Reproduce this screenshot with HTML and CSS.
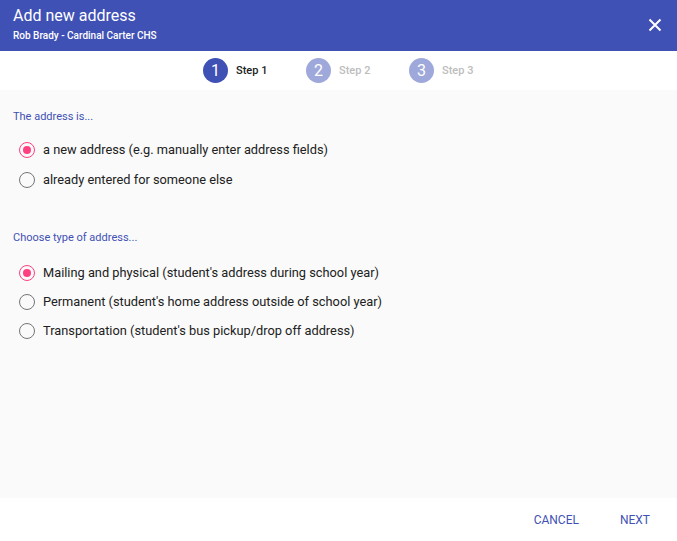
FILE: index.html
```html
<!DOCTYPE html>
<html>
<head>
<meta charset="utf-8">
<link rel="stylesheet" href="styles.css">
</head>
<body>
<div class="dialog">
  <header class="header">
    <div class="titles">
      <div class="title">Add new address</div>
      <div class="subtitle">Rob Brady - Cardinal Carter CHS</div>
    </div>
    <button class="close" aria-label="Close">
      <svg width="14" height="14" viewBox="0 0 14 14"><path d="M1.5 1.5 L12.5 12.5 M12.5 1.5 L1.5 12.5" stroke="#fff" stroke-width="2" fill="none"/></svg>
    </button>
  </header>
  <nav class="stepper">
    <div class="step active"><span class="num">1</span><span class="label">Step 1</span></div>
    <div class="step"><span class="num">2</span><span class="label">Step 2</span></div>
    <div class="step"><span class="num">3</span><span class="label">Step 3</span></div>
  </nav>
  <main class="content">
    <div class="section-label">The address is...</div>
    <div class="group">
      <label class="radio checked"><span class="ring"></span><span>a new address (e.g. manually enter address fields)</span></label>
      <label class="radio"><span class="ring"></span><span>already entered for someone else</span></label>
    </div>
    <div class="section-label second">Choose type of address...</div>
    <div class="group group-two">
      <label class="radio checked"><span class="ring"></span><span>Mailing and physical (student's address during school year)</span></label>
      <label class="radio"><span class="ring"></span><span>Permanent (student's home address outside of school year)</span></label>
      <label class="radio"><span class="ring"></span><span>Transportation (student's bus pickup/drop off address)</span></label>
    </div>
  </main>
  <footer class="footer">
    <button class="btn">CANCEL</button>
    <button class="btn">NEXT</button>
  </footer>
</div>
</body>
</html>
```
FILE: styles.css
```css
* { box-sizing: border-box; }
html, body { margin: 0; padding: 0; }
body {
  font-family: Roboto, "Liberation Sans", Arial, sans-serif;
  background: #fff;
  width: 677px;
  height: 541px;
  overflow: hidden;
}
.dialog {
  display: flex;
  flex-direction: column;
  height: 541px;
}
.header {
  height: 51px;
  background: #3f51b5;
  color: #fff;
  display: flex;
  justify-content: space-between;
  align-items: flex-start;
  padding: 0 0 0 13px;
}
.title {
  font-size: 16px;
  line-height: 20px;
  margin-top: 6px;
}
.subtitle {
  font-size: 10px;
  font-weight: 500;
  line-height: 12px;
  margin-top: 4px;
}
.close {
  border: 0;
  background: transparent;
  padding: 0;
  width: 14px;
  height: 14px;
  margin: 18px 15px 0 0;
  display: flex;
  cursor: pointer;
}
.stepper {
  height: 39px;
  display: flex;
  justify-content: center;
  align-items: center;
  gap: 38px;
  background: #fff;
}
.step {
  display: flex;
  align-items: center;
  gap: 8px;
}
.num {
  width: 25px;
  height: 25px;
  border-radius: 50%;
  background: #9fa8da;
  color: #fff;
  font-size: 16px;
  display: flex;
  align-items: center;
  justify-content: center;
}
.step.active .num { background: #3f51b5; }
.label {
  font-size: 11px;
  font-weight: 500;
  color: #bdbdbd;
  width: 32px;
}
.step.active .label { color: #212121; }
.content {
  flex: 1;
  background: #fafafa;
  padding: 20px 13px 0 13px;
}
.section-label {
  font-size: 11px;
  line-height: 13px;
  color: #3f51b5;
}
.section-label.second { margin-top: 43px; }
.group {
  display: flex;
  flex-direction: column;
  gap: 13.5px;
  padding-top: 19px;
  padding-left: 6px;
}
.group-two { padding-top: 21px; gap: 13px; }
.radio {
  display: flex;
  align-items: center;
  gap: 8px;
  font-size: 12.8px;
  line-height: 16px;
  color: #212121;
}
.ring {
  width: 16px;
  height: 16px;
  border-radius: 50%;
  border: 1.5px solid #757575;
  display: flex;
  align-items: center;
  justify-content: center;
  flex: none;
}
.radio.checked .ring { border-color: #ff4081; }
.radio.checked .ring::after {
  content: "";
  width: 8px;
  height: 8px;
  border-radius: 50%;
  background: #ff4081;
}
.footer {
  height: 43px;
  background: #fff;
  display: flex;
  justify-content: flex-end;
  align-items: center;
  gap: 17px;
  padding-right: 15px;
}
.btn {
  border: 0;
  background: transparent;
  font-family: Roboto, "Liberation Sans", Arial, sans-serif;
  font-size: 12px;
  color: #3f51b5;
  padding: 8px 12px;
  cursor: pointer;
}
```
